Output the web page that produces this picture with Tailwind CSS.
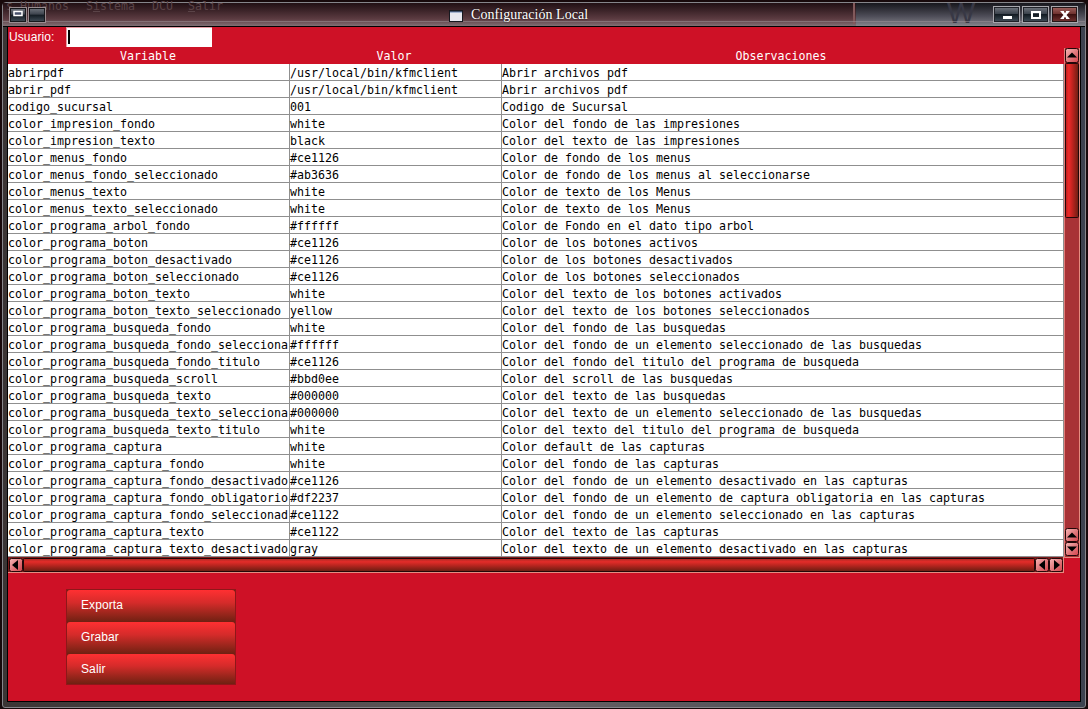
<!DOCTYPE html>
<html lang="es">
<head>
<meta charset="utf-8">
<title>Configuración Local</title>
<script src="https://cdn.jsdelivr.net/npm/@tailwindcss/browser@4"></script>
</head>
<body class="w-[1088px] h-[709px] overflow-hidden bg-[#17090b] font-['Liberation_Sans',sans-serif]">
<div class="relative w-full h-full flex flex-col">
  <div class="absolute inset-x-[2px] top-[2px] bottom-[1px] rounded-t-[4px] rounded-b-[3px] border border-[#85858a] bg-linear-to-r from-[#3b3535] via-[#665f62] to-[#3d4350]"></div>
  <!-- title bar -->
  <header class="relative h-[27px] shrink-0 ml-[3px] mr-[3px] mt-0 flex items-center border-b border-black">
    <div class="absolute inset-x-0 top-[3px] bottom-0 bg-linear-to-b from-[#211014] via-[#5d3c42] via-70% to-[#807075]"></div>
    <div class="absolute right-0 top-[3px] bottom-0 w-[229px] bg-linear-to-b from-[#17171d] via-[#51505b] via-60% to-[#85858c]"></div>
    <div class="absolute left-[850px] top-[3px] w-[2px] h-[21px] bg-[#82595b]"></div>
    <div class="absolute left-[944px] top-0 text-[30px] leading-[26px] font-['Liberation_Sans',sans-serif] text-[#383845]">W</div>
    <div class="absolute left-[3px] top-[-1px] text-[11.63px] leading-[14px] whitespace-pre font-['DejaVu_Sans_Mono',monospace] text-[#5a4347]">s Humanos</div>
    <div class="absolute left-[83px] top-[-1px] text-[11.63px] leading-[14px] font-['DejaVu_Sans_Mono',monospace] text-[#5a4347]">S<u>i</u>stema</div>
    <div class="absolute left-[149px] top-[-1px] text-[11.63px] leading-[14px] font-['DejaVu_Sans_Mono',monospace] text-[#5a4347]">DCU</div>
    <div class="absolute left-[185px] top-[-1px] text-[11.63px] leading-[14px] font-['DejaVu_Sans_Mono',monospace] text-[#5a4347]"><u>S</u>alir</div>
    <div class="absolute inset-x-0 top-[21px] h-px bg-[#a0949a]/50"></div>
    <svg class="absolute left-[6px] top-[7px]" width="37" height="17" viewBox="0 0 37 17">
      <defs><linearGradient id="tb" x1="0" y1="0" x2="0" y2="1"><stop offset="0" stop-color="#777b84"/><stop offset=".45" stop-color="#3c434d"/><stop offset=".5" stop-color="#131b23"/><stop offset="1" stop-color="#46535e"/></linearGradient></defs>
      <rect x=".5" y=".5" width="17" height="15" fill="url(#tb)" stroke="#998c90"/><rect x="1.5" y="1.5" width="15" height="13" fill="none" stroke="#17181c"/>
      <rect x="19.500" y=".5" width="17" height="15" fill="url(#tb)" stroke="#998c90"/><rect x="20.500" y="1.500" width="15" height="13" fill="none" stroke="#17181c"/>
      <rect x="5" y="4.500" width="8" height="4" fill="#47506a" stroke="#fff" stroke-width="1.500"/>
    </svg>
    <svg class="absolute left-[446px] top-[10px]" width="14" height="12" viewBox="0 0 14 12"><rect x=".5" y=".5" width="13" height="11" fill="#e7e7ef" stroke="#16181f"/><path d="M1 1.500h12" stroke="#41516f"/><path d="M1 2.500h12" stroke="#a5b4d0"/></svg>
    <div class="absolute left-[468px] top-[6px] text-[14px] leading-[18px] whitespace-nowrap font-['Liberation_Serif',serif] text-white tracking-[0.05px] [text-shadow:0_0_2px_#000]">Configuración Local</div>
    <svg class="absolute left-[990px] top-[6px]" width="87" height="19" viewBox="0 0 87 19">
      <defs><linearGradient id="rb" x1="0" y1="0" x2="0" y2="1"><stop offset="0" stop-color="#a56965"/><stop offset=".45" stop-color="#713330"/><stop offset=".5" stop-color="#3d1110"/><stop offset="1" stop-color="#783735"/></linearGradient></defs>
      <g fill="none"><rect x=".5" y=".5" width="26" height="16" fill="url(#tb)" stroke="#a6a6ac"/><rect x="1.500" y="1.500" width="24" height="14" stroke="#202229"/>
      <rect x="29.500" y=".5" width="26" height="16" fill="url(#tb)" stroke="#a6a6ac"/><rect x="30.500" y="1.500" width="24" height="14" stroke="#202229"/>
      <rect x="58.500" y=".5" width="26" height="16" fill="url(#rb)" stroke="#a6a6ac"/><rect x="59.500" y="1.500" width="24" height="14" stroke="#251718"/>
      <path d="M10 11.500h9" stroke="#fff" stroke-width="3"/><rect x="39" y="6" width="8" height="6" stroke="#fff" stroke-width="2"/><path d="M69 5.500l6 7M75 5.500l-6 7" stroke="#fff" stroke-width="2.500"/><path d="M67.500 5.500h3.500M73 5.500h3.500M67.500 12.500h3.500M73 12.500h3.500" stroke="#fff"/></g>
    </svg>
  </header>
  <!-- window contents -->
  <main class="relative ml-[7px] mr-[7px] h-[675px] flex flex-col bg-[#ce1126] border-x border-b border-black">
    <div class="h-[21px] shrink-0 flex text-white">
      <label class="w-[58px] pl-px text-[12px] leading-[20px] tracking-[0.1px]">Usuario:</label>
      <div class="w-[146px] h-[20px] bg-white border-t border-l border-[#e7a0a8] pt-[2px] pl-px"><div class="w-[2px] h-[14px] bg-black"></div></div>
    </div>
    <section class="flex h-[509px] shrink-0">
      <div class="w-[1056px] shrink-0">
        <div class="h-[16px] grid grid-cols-[280px_212px_562px] text-center text-white text-[11.63px] leading-[16px] font-['DejaVu_Sans_Mono',monospace]"><div>Variable</div><div>Valor</div><div>Observaciones</div></div>
        <div id="rows" class="bg-white text-black text-[11.63px] leading-[18px] font-['DejaVu_Sans_Mono',monospace]"></div>
      </div>
      <div class="w-[16px] h-[510px] shrink-0 bg-[#a83236] border-l border-[#e07b78]">
        <svg width="15" height="510" viewBox="0 0 15 510">
          <defs>
            <linearGradient id="v"><stop offset="0" stop-color="#b81e1b"/><stop offset=".25" stop-color="#ed2a29"/><stop offset=".5" stop-color="#c42420"/><stop offset="1" stop-color="#691e12"/></linearGradient>
            <linearGradient id="b" x1="0" y1="0" x2="1" y2="1"><stop offset="0" stop-color="#f6b8b8"/><stop offset=".55" stop-color="#df7478"/><stop offset="1" stop-color="#d6424b"/></linearGradient>
          </defs>
          <path d="M14.500 0v510" stroke="#e58c80"/>
          <rect x=".5" y=".5" width="13" height="14" rx="2" fill="url(#b)" stroke="#210708"/><path d="M2 9.500h10l-5-5z"/>
          <rect x=".5" y="15.500" width="13" height="154" rx="1" fill="url(#v)" stroke="#210708"/>
          <rect x=".5" y="480.500" width="13" height="13" rx="2" fill="url(#b)" stroke="#210708"/><path d="M2 489.500h10l-5-5z"/>
          <rect x=".5" y="494.500" width="13" height="13" rx="2" fill="url(#b)" stroke="#210708"/><path d="M2 498.500h10l-5 5z"/>
          <path d="M0 509.500h15" stroke="#e58c80"/>
        </svg>
      </div>
    </section>
    <svg class="shrink-0" width="1056" height="16" viewBox="0 0 1056 16">
      <defs><linearGradient id="h" x1="0" y1="0" x2="0" y2="1"><stop offset="0" stop-color="#a72923"/><stop offset=".25" stop-color="#e32c29"/><stop offset=".5" stop-color="#bd2620"/><stop offset="1" stop-color="#661c10"/></linearGradient></defs>
      <rect width="1056" height="16" fill="#7d1b1b"/><path d="M0 15.500h1056M1055.500 0v16" stroke="#e58c80"/>
      <rect x="1.500" y="1.500" width="13" height="13" rx="2" fill="url(#b)" stroke="#210708"/><path d="M10 3v10l-6-5z"/>
      <rect x="15.500" y="1.500" width="1011" height="13" rx="1" fill="url(#h)" stroke="#210708"/>
      <rect x="1027.500" y="1.500" width="13" height="13" rx="2" fill="url(#b)" stroke="#210708"/><path d="M1037 3v10l-6-5z"/>
      <rect x="1041.500" y="1.500" width="13" height="13" rx="2" fill="url(#b)" stroke="#210708"/><path d="M1046 3v10l6-5z"/>
    </svg>
    <div class="ml-[58px] mt-[16px] w-[170px] h-[96px] shrink-0 flex flex-col border border-[#8e1719] bg-[#701d11] text-white text-[12px] tracking-[0.1px]">
      <button class="h-[32px] pl-[14px] pb-[2px] text-left rounded-t-[3px] bg-linear-to-b from-[#ff3032] via-[#d52b2a] via-40% to-[#702012]">Exporta</button>
      <button class="h-[32px] pl-[14px] pb-[2px] text-left rounded-t-[3px] bg-linear-to-b from-[#ff3032] via-[#d52b2a] via-40% to-[#702012]">Grabar</button>
      <button class="h-[30px] pl-[14px] pb-px text-left rounded-t-[3px] bg-linear-to-b from-[#ff3032] via-[#d52b2a] via-40% to-[#702012]">Salir</button>
    </div>
  </main>
</div>
<script>
const data = `abrirpdf|/usr/local/bin/kfmclient|Abrir archivos pdf
abrir_pdf|/usr/local/bin/kfmclient|Abrir archivos pdf
codigo_sucursal|001|Codigo de Sucursal
color_impresion_fondo|white|Color del fondo de las impresiones
color_impresion_texto|black|Color del texto de las impresiones
color_menus_fondo|#ce1126|Color de fondo de los menus
color_menus_fondo_seleccionado|#ab3636|Color de fondo de los menus al seleccionarse
color_menus_texto|white|Color de texto de los Menus
color_menus_texto_seleccionado|white|Color de texto de los Menus
color_programa_arbol_fondo|#ffffff|Color de Fondo en el dato tipo arbol
color_programa_boton|#ce1126|Color de los botones activos
color_programa_boton_desactivado|#ce1126|Color de los botones desactivados
color_programa_boton_seleccionado|#ce1126|Color de los botones seleccionados
color_programa_boton_texto|white|Color del texto de los botones activados
color_programa_boton_texto_seleccionado|yellow|Color del texto de los botones seleccionados
color_programa_busqueda_fondo|white|Color del fondo de las busquedas
color_programa_busqueda_fondo_selecciona|#ffffff|Color del fondo de un elemento seleccionado de las busquedas
color_programa_busqueda_fondo_titulo|#ce1126|Color del fondo del titulo del programa de busqueda
color_programa_busqueda_scroll|#bbd0ee|Color del scroll de las busquedas
color_programa_busqueda_texto|#000000|Color del texto de las busquedas
color_programa_busqueda_texto_selecciona|#000000|Color del texto de un elemento seleccionado de las busquedas
color_programa_busqueda_texto_titulo|white|Color del texto del titulo del programa de busqueda
color_programa_captura|white|Color default de las capturas
color_programa_captura_fondo|white|Color del fondo de las capturas
color_programa_captura_fondo_desactivado|#ce1126|Color del fondo de un elemento desactivado en las capturas
color_programa_captura_fondo_obligatorio|#df2237|Color del fondo de un elemento de captura obligatoria en las capturas
color_programa_captura_fondo_seleccionad|#ce1122|Color del fondo de un elemento seleccionado en las capturas
color_programa_captura_texto|#ce1122|Color del texto de las capturas
color_programa_captura_texto_desactivado|gray|Color del texto de un elemento desactivado en las capturas`;
document.getElementById('rows').innerHTML = data.split('\n').map(line =>
  '<div class="h-[17px] grid grid-cols-[282px_212px_562px]">' + line.split('|').map(c =>
    '<div class="h-[17px] border-b border-r border-[#8f8f8f] whitespace-pre">' + c + '</div>').join('') + '</div>').join('');
</script>
</body>
</html>
